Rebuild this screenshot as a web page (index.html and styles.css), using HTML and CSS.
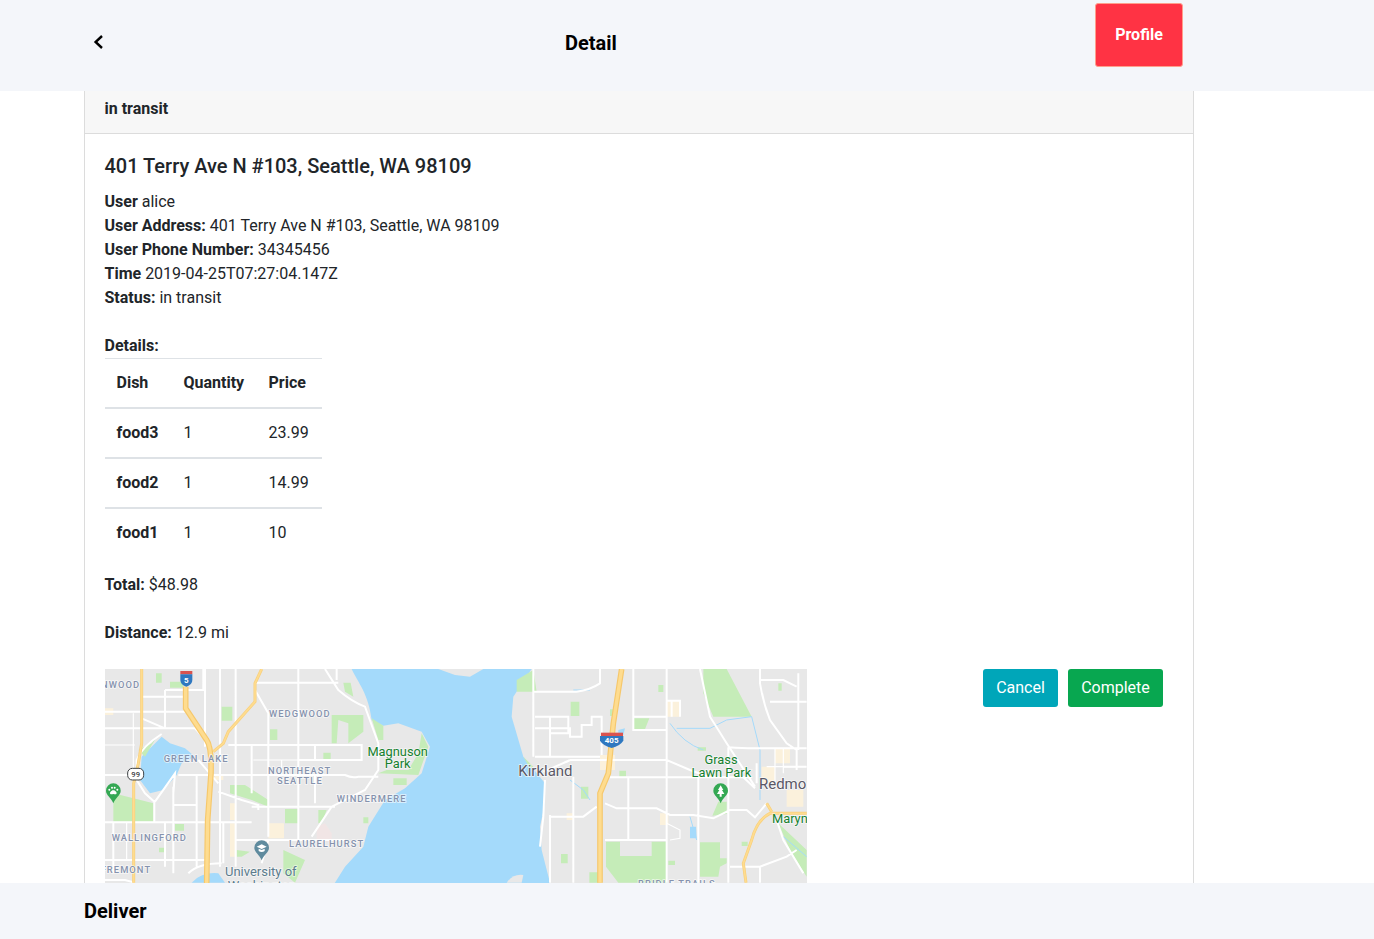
FILE: index.html
```html
<!DOCTYPE html>
<html lang="en">
<head>
<meta charset="utf-8">
<title>Detail</title>
<link rel="stylesheet" href="styles.css">
</head>
<body>
<div class="app">
  <header class="topbar">
    <a class="back" aria-label="Back">
      <svg class="back-icon" viewBox="0 0 15 20"><path d="M10 4 3.6 10 10 16"/></svg>
    </a>
    <h1 class="topbar-title">Detail</h1>
    <button class="profile-btn">Profile</button>
  </header>
  <main class="content">
    <section class="card">
      <div class="card-header">in transit</div>
      <div class="card-body">
        <h5 class="card-title">401 Terry Ave N #103, Seattle, WA 98109</h5>
        <div class="info">
          <div><b>User</b> alice</div>
          <div><b>User Address:</b> 401 Terry Ave N #103, Seattle, WA 98109</div>
          <div><b>User Phone Number:</b> 34345456</div>
          <div><b>Time</b> 2019-04-25T07:27:04.147Z</div>
          <div><b>Status:</b> in transit</div>
        </div>
        <div class="details-label"><b>Details:</b></div>
        <table class="dishes">
          <colgroup><col class="col-dish"><col class="col-qty"><col class="col-price"></colgroup>
          <thead><tr><th>Dish</th><th>Quantity</th><th>Price</th></tr></thead>
          <tbody>
            <tr><th>food3</th><td>1</td><td>23.99</td></tr>
            <tr><th>food2</th><td>1</td><td>14.99</td></tr>
            <tr><th>food1</th><td>1</td><td>10</td></tr>
          </tbody>
        </table>
        <p class="summary"><b>Total:</b> $48.98</p>
        <p class="summary"><b>Distance:</b> 12.9 mi</p>
        <div class="map-row">
          <svg class="map" viewBox="0 0 702 240">
            <rect class="land" width="702" height="240"/>
            <g transform="translate(-20,-9) scale(.33333)">
              <path class="water" d="M800 27C820 70 850 100 860 180L895 197 940 190 1010 215 1035 260 1010 340 960 385 900 420 850 500 835 560 780 620 730 700H1400L1395 668 1370 570 1365 500 1380 430 1380 370 1315 290 1280 170 1285 110 1340 27Z"/>
              <path class="land" d="M1060 27 1110 45 1155 50 1195 27Z"/>
              <path class="water" d="M230 230 170 290 165 360 195 400 235 390 275 345 290 310 330 290 300 265 255 250Z"/>
              <path class="water" d="M320 668Q350 635 400 640L420 668Z"/>
              <path class="park" d="M213 40h17v28h-17zM410 140h32v42h-32zM555 208h22v32h-22zM715 278h22v20h-22zM740 165H835V215L790 250V190L760 180 755 250H740ZM860 175 895 197V240H880ZM880 340 1000 345 1030 260 1010 220 1000 280 970 330 905 330ZM925 355h40v20h-40zM85 400 205 430V485H85ZM160 270 200 250 215 230 180 290ZM435 375H480L550 420V440L500 420 435 400ZM600 447h42v43h-42zM270 492h27v20h-27zM222 563h18v14h-18zM595 570 660 600 630 668 595 640ZM455 570 495 575 470 590H455ZM255 65h40v18h-40zM775 68h22l8 42-25-15zM700 450h25l-15 40h-10zM835 472h15v18h-15z"/>
              <path class="tan" d="M550 490h47v45h-47zM435 430h15v50h-15zM435 490h15v100h-15zM60 145h25v20H60zM390 345h25v15h-25z"/>
              <path class="pink" d="M695 500 720 490 740 520V545H695Z"/>
              <path class="road" d="M240 90H355V27M60 155H300M60 205H240L170 175M240 205H330L380 260M405 27V620M452 27V620M360 27V260M172 110H300M240 90V205M510 68H760M720 27 760 90Q800 125 840 140L880 250V330L840 390 740 440 680 530M510 90 550 160V530M640 27V530M430 255H830V300H640M500 255V400M690 255V300M640 300V540M60 345H130M280 345H780Q800 355 820 350H880M690 345V430M500 440H750M400 395 470 420 520 435V450M60 487H500M265 380V640M265 435H335M335 345V620M60 600H360M240 490V620M550 540H780M450 540H550M230 222Q170 260 155 300V360L180 400 208 425V487M85 487V640M210 425 270 340 265 400M340 300 400 370M60 660H120L150 668M310 640Q340 610 410 610M550 540 530 610M755 27V60M415 490V610"/>
              <path class="road-thin" d="M60 255H150M145 160V487M125 487V600M505 300H640M590 300V345M550 345V440"/>
              <path class="hw-edge" d="M302 80V145L365 240Q380 260 378 340L368 480 365 670"/>
              <path class="hw" d="M302 80V145L365 240Q380 260 378 340L368 480 365 670"/>
              <path class="hw-sm-edge" d="M170 27V250L160 310 146 370V668M530 27 510 70V125L430 215 415 250 385 275"/>
              <path class="hw-sm" d="M170 27V250L160 310 146 370V668M530 27 510 70V125L430 215 415 250 385 275"/>
              <path class="shield-red" d="M286 33h36v10h-36z"/>
              <path class="shield-blue" d="M286 43h36v17q0 14-18 20-18-6-18-20z"/>
              <text class="shield-text" x="304" y="68">5</text>
              <rect class="shield-99" x="128" y="325" width="48" height="35" rx="14"/>
              <text class="shield-99-text" x="152" y="351">99</text>
              <path class="pin-green" d="M85 370a22 22 0 0 1 22 22c0 14-15 20-22 38-7-18-22-24-22-38a22 22 0 0 1 22-22z"/>
              <path class="pin-glyph" d="M85 391c7 0 12 8 9 11-3 2-6 0-9 0s-6 2-9 0c-3-3 2-11 9-11z"/>
              <circle class="pin-glyph" cx="73" cy="389" r="3"/><circle class="pin-glyph" cx="81" cy="383" r="3"/><circle class="pin-glyph" cx="89" cy="383" r="3"/><circle class="pin-glyph" cx="97" cy="389" r="3"/>
              <path class="pin-school" d="M530 541a22 22 0 0 1 22 22c0 14-15 20-22 38-7-18-22-24-22-38a22 22 0 0 1 22-22z"/>
              <path class="pin-glyph" d="M530 553 545 560 530 567 515 560ZM521 566 530 570 539 566V573Q530 579 521 573Z"/>
              <g class="label">
                <text x="48" y="84">NWOOD</text>
                <text x="552" y="171">WEDGWOOD</text>
                <text x="236" y="306">GREEN LAKE</text>
                <text x="549" y="342">NORTHEAST</text>
                <text x="576" y="372">SEATTLE</text>
                <text x="755" y="426">WINDERMERE</text>
                <text x="80" y="544">WALLINGFORD</text>
                <text x="612" y="561">LAURELHURST</text>
                <text x="47" y="640">FREMONT</text>
              </g>
              <g class="label-park">
                <text x="938" y="287">Magnuson</text>
                <text x="938" y="324">Park</text>
              </g>
              <g class="label-poi">
                <text x="420" y="648">University of</text>
                <text x="428" y="689">Washington</text>
              </g>
            </g>
            <g transform="translate(345,-9) scale(.33333)">
              <path class="park" d="M760 27H830L905 170H790L760 100ZM362 125h26v43h-26zM625 75h15v21h-15zM480 148h15v20h-15zM552 175H598L585 208H552ZM743 262h25v10h-25zM508 332h20v18h-20zM393 380h22v36h-22zM333 582h20v28h-20zM805 425H830V462L787 467ZM468 545H510V588H605V545H650V668H505L468 620ZM750 547H810V595H830V610L810 620 805 650H750ZM875 545h18v13h-18zM655 602h20v13h-20zM418 637h27v31h-27zM985 70h10v22h-10zM985 490 1070 570V650L1020 570ZM200 60 250 30 260 95H200ZM220 290 250 320 240 325Z"/>
              <path class="tan" d="M975 265h45v45h-45zM935 320h40v50h-40zM1010 390h50v50h-50zM630 460h25v35h-25zM350 460h20v20h-20zM450 285h45v45h-45zM650 122h40v48h-40z"/>
              <path class="stream" d="M660 190Q700 250 760 270M680 205 780 205 830 180 905 170 930 270V420M370 90H420M360 360 400 390 420 420M720 470 740 540M1000 530 1070 590"/>
              <path class="water" d="M720 500h18l2 35h-20ZM505 210 525 205 520 225H505Z"/>
              <path class="land" d="M170 668Q190 640 220 645L215 668Z"/>
              <path class="road" d="M250 27V95H380Q420 90 450 70V27M255 170H355V220H300M300 170V290M255 205H360V230H395V195H425V170H455V285M255 290H450M250 95V290M360 300H650L720 330 780 352H880L915 385M360 300Q340 310 280 335M480 352H905M535 352V540M650 27V668M550 27V210H650M550 170H650M650 122H690V170M665 122V170M750 27 780 170 830 250 915 380M745 352V668M835 262V668M835 262Q880 265 910 265H1070M930 27V70Q940 130 960 180L1010 250 1040 270V330M1045 40V270M930 60H1000L1040 80M960 125H1070M1000 320H1070M920 310V370M300 465V668M370 350V668M300 470H400L440 440M465 430 500 445H620L660 465H730L790 475 840 450H890L915 472 950 430M465 540H650M840 620H930L1010 590 1040 570M930 620V668M980 480 1000 540 1060 640M285 360 280 470 270 560"/>
              <path class="road-thin" d="M950 320H1040M975 265V370M1000 265V340M650 490 690 510V535L660 540"/>
              <path class="hw-edge" d="M515 27 490 190 475 340 450 400V668"/>
              <path class="hw" d="M515 27 490 190 475 340 450 400V668"/>
              <path class="hw-sm-edge" d="M1070 460H960Q920 480 905 540L880 610 888 668M950 430 965 455"/>
              <path class="hw-sm" d="M1070 460H960Q920 480 905 540L880 610 888 668M950 430 965 455"/>
              <path class="shield-red" d="M453 218h66v10h-66z"/>
              <path class="shield-blue" d="M450 228h70v14q-10 16-35 22-25-6-35-22z"/>
              <text class="shield-text" x="485" y="250">405</text>
              <path class="pin-green" d="M812 370a22 22 0 0 1 22 22c0 14-15 20-22 38-7-18-22-24-22-38a22 22 0 0 1 22-22z"/>
              <path class="pin-glyph" d="M812 376 820 390H816L823 402H815V410H809V402H801L808 390H804Z"/>
              <g class="label-park">
                <text x="813" y="312">Grass</text>
                <text x="814" y="351">Lawn Park</text>
                <text class="label-start" x="966" y="490">Maryn</text>
              </g>
              <g class="label-city">
                <text x="205" y="347">Kirkland</text>
                <text x="927" y="387">Redmo</text>
              </g>
              <text class="label-solo" x="564" y="680">BRIDLE TRAILS</text>
            </g>
          </svg>
          <div class="actions">
            <button class="action action-cancel">Cancel</button>
            <button class="action action-complete">Complete</button>
          </div>
        </div>
      </div>
    </section>
  </main>
  <footer class="bottombar">Deliver</footer>
</div>
</body>
</html>
```

FILE: styles.css
```css
* { box-sizing: border-box; }
html, body { margin: 0; height: 100%; }
body {
  font-family: Roboto, "Liberation Sans", sans-serif;
  font-size: 16px;
  line-height: 24px;
  color: #212529;
  background: #fff;
}
b { font-weight: 700; }
.app { height: 939px; display: flex; flex-direction: column; overflow: hidden; }

.topbar {
  flex: 0 0 91px;
  background: #f4f6fa;
  display: flex;
  padding: 0 191px 0 84px;
  color: #000;
}
.back { width: 481px; padding: 32px 0 0 8px; flex: none; }
.back-icon { width: 15px; height: 20px; display: block; }
.back-icon path { fill: none; stroke: #000; stroke-width: 2.4; }
.topbar-title { margin: 31px 0 0; font-size: 20px; line-height: 24px; font-weight: 700; }
.profile-btn {
  margin: 3px 0 0 auto;
  width: 88px;
  height: 64px;
  border: 1px solid #ff9f8c;
  border-radius: 3px;
  background: #ff3344;
  color: #fff;
  font: 700 16px/24px Roboto, sans-serif;
  padding: 0 0 1px;
}

.content { flex: 1; min-height: 0; overflow: hidden; }
.card {
  width: 1110px;
  margin-left: 84px;
  border: 1px solid #dcdcdc;
  border-width: 0 1px;
}
.card-header {
  height: 43px;
  padding: 6px 19.5px 0;
  background: #f7f7f7;
  border-bottom: 1px solid #dcdcdc;
  font-weight: 700;
}
.card-body { padding: 20px 20px 20px 19.5px; }
.card-title { margin: 0 0 12px; font-size: 20px; line-height: 24px; font-weight: 500; }
.info { margin-bottom: 24px; }
.details-label { line-height: 24px; }

.dishes { border-collapse: separate; border-spacing: 0; margin-bottom: 16px; table-layout: fixed; width: 217.5px; }
.col-dish { width: 67px; }
.col-qty { width: 85px; }
.col-price { width: 65.5px; }
.dishes th, .dishes td { padding: 12px; text-align: left; border-top: 2px solid #dee2e6; line-height: 24px; font-weight: 400; }
.dishes th { font-weight: 700; }
.dishes thead th { border-top-width: 1px; }

.summary { margin: 0 0 24px; }

.map-row { display: flex; align-items: flex-start; padding-right: 10px; margin-top: 1px; }
.map { width: 702px; height: 240px; display: block; flex: none; margin-left: .5px; }
.actions { margin-left: auto; display: flex; gap: 10px; }
.action {
  height: 38px;
  border: 0;
  border-radius: 3px;
  padding: 0;
  color: #fff;
  font: 400 16px/24px Roboto, sans-serif;
}
.action-cancel { background: #00a6b9; width: 75px; }
.action-complete { background: #08a750; width: 95px; }

.bottombar {
  flex: 0 0 56px;
  background: #f4f6fa;
  padding: 16px 0 0 84px;
  font-size: 20px;
  line-height: 24px;
  font-weight: 700;
  color: #000;
}

.land { fill: #e8e8e8; }
.water { fill: #a4dafb; }
.park { fill: #c5ecb8; }
.tan { fill: #fbf1dc; }
.pink { fill: #f1e5e5; }
.road { fill: none; stroke: #fff; stroke-width: 6; }
.road-thin { fill: none; stroke: #fff; stroke-width: 3.5; }
.stream { fill: none; stroke: #a4dafb; stroke-width: 3; }
.hw-edge { fill: none; stroke: #f6c86c; stroke-width: 17; }
.hw { fill: none; stroke: #fedc8f; stroke-width: 10; }
.hw-sm-edge { fill: none; stroke: #f8cf7c; stroke-width: 9; }
.hw-sm { fill: none; stroke: #fedc8f; stroke-width: 5; }
.shield-red { fill: #d9534f; }
.shield-blue { fill: #2f78c0; }
.shield-text { fill: #fff; font: 700 24px Roboto, sans-serif; text-anchor: middle; }
.shield-99 { fill: #fff; stroke: #3c4043; stroke-width: 3; }
.shield-99-text { fill: #3c4043; font: 500 23px Roboto, sans-serif; text-anchor: middle; }
.pin-green { fill: #34a853; }
.pin-school { fill: #5f8b9e; }
.pin-glyph { fill: #fff; }
.label text, .label-solo {
  fill: #8592ad;
  font: 500 28px Roboto, sans-serif;
  letter-spacing: 3.2px;
  paint-order: stroke;
  stroke: #fff;
  stroke-opacity: .7;
  stroke-width: 5px;
}
.label-park text {
  fill: #16802f;
  font: 400 38.5px Roboto, sans-serif;
  text-anchor: middle;
  paint-order: stroke;
  stroke: #fff;
  stroke-opacity: .6;
  stroke-width: 5px;
}
.label-park .label-start { text-anchor: start; }
.label-poi text {
  fill: #5b7b8c;
  font: 400 39px Roboto, sans-serif;
  paint-order: stroke;
  stroke: #fff;
  stroke-opacity: .6;
  stroke-width: 5px;
}
.label-city text {
  fill: #5a5866;
  font: 400 45px Roboto, sans-serif;
  paint-order: stroke;
  stroke: #fff;
  stroke-opacity: .7;
  stroke-width: 5px;
}
```
